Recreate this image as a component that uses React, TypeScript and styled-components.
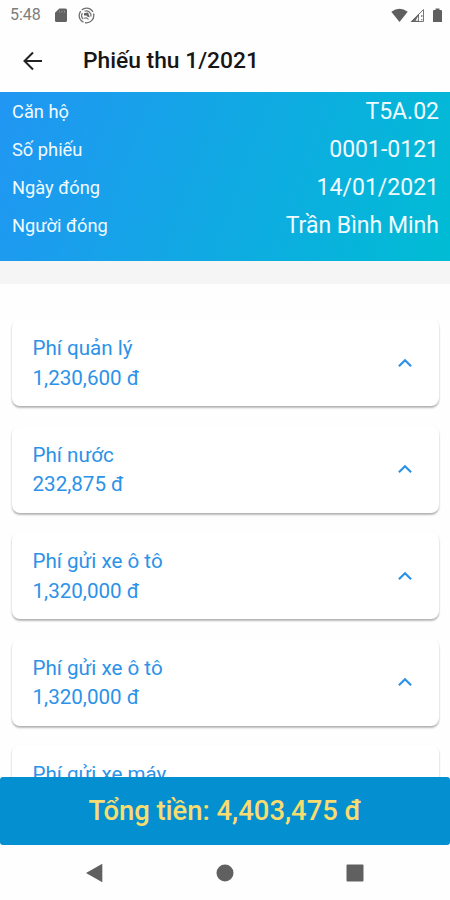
import React from 'react';
import styled, { createGlobalStyle } from 'styled-components';

const GlobalStyle = createGlobalStyle`
  * { box-sizing: border-box; }
  body { margin: 0; background: #fff; font-family: Roboto, 'Noto Sans', sans-serif; }
`;

const Screen = styled.div`
  width: 450px;
  height: 900px;
  display: flex;
  flex-direction: column;
  overflow: hidden;
  background: #fefefe;
`;

const StatusBar = styled.div`
  height: 30px;
  flex: none;
  display: flex;
  align-items: center;
  justify-content: space-between;
  padding: 0 8px 0 10px;
  color: #7c7c7c;
`;

const StatusGroup = styled.div<{ $gap: number }>`
  display: flex;
  align-items: center;
  gap: ${(p) => p.$gap}px;
`;

const Clock = styled.span`
  width: 31px;
  font-size: 16px;
  line-height: 30px;
  white-space: nowrap;
`;

const Header = styled.header`
  height: 62px;
  flex: none;
  display: flex;
  align-items: center;
  gap: 39px;
  padding: 0 0 1px 22px;
`;

const Title = styled.h1`
  margin: 0;
  font-size: 22.8px;
  line-height: 31px;
  font-weight: 500;
  color: #161616;
  white-space: nowrap;
`;

const Summary = styled.section`
  height: 169px;
  flex: none;
  padding: 1px 11px 0 12px;
  background: linear-gradient(110deg, #2196f3 0%, #00bcd4 100%);
  color: #f1fbff;
`;

const SummaryRow = styled.div`
  height: 37.8px;
  display: flex;
  align-items: center;
  justify-content: space-between;
  white-space: nowrap;
`;

const Label = styled.span`
  font-size: 18.3px;
`;

const Value = styled.span`
  font-size: 23px;
`;

const Divider = styled.div`
  height: 23px;
  flex: none;
  background: #f5f5f5;
`;

const FeeList = styled.main`
  flex: 1;
  min-height: 0;
  overflow: hidden;
  display: flex;
  flex-direction: column;
  gap: 19.6px;
  padding: 35px 11px 0 12px;
`;

const FeeCard = styled.article`
  height: 87px;
  flex: none;
  display: flex;
  align-items: flex-start;
  justify-content: space-between;
  padding: 15px 26px 0 20.5px;
  border-radius: 8px;
  background: #fff;
  box-shadow: 0 2px 2px rgba(0, 0, 0, 0.24), 0 1px 2px rgba(0, 0, 0, 0.1);
`;

const FeeText = styled.div`
  font-size: 20.6px;
  line-height: 29.5px;
  color: #2c92e8;
  white-space: nowrap;
`;

const CardIcon = styled.div`
  display: flex;
  padding-top: 23.5px;
`;

const Total = styled.footer`
  height: 68px;
  flex: none;
  display: flex;
  align-items: center;
  justify-content: center;
  border-radius: 3px;
  background: #0490d0;
  color: #f8dc70;
  font-size: 27.4px;
  font-weight: 500;
  white-space: nowrap;
`;

const NavBar = styled.nav`
  height: 55px;
  flex: none;
  display: flex;
  align-items: center;
  justify-content: space-between;
  padding: 1px 86px 0 85px;
`;

const details = [
  ['Căn hộ', 'T5A.02'],
  ['Số phiếu', '0001-0121'],
  ['Ngày đóng', '14/01/2021'],
  ['Người đóng', 'Trần Bình Minh'],
];

const fees: { name: string; amount?: string }[] = [
  { name: 'Phí quản lý', amount: '1,230,600 đ' },
  { name: 'Phí nước', amount: '232,875 đ' },
  { name: 'Phí gửi xe ô tô', amount: '1,320,000 đ' },
  { name: 'Phí gửi xe ô tô', amount: '1,320,000 đ' },
  { name: 'Phí gửi xe máy' },
];

const SdCardIcon = () => (
  <svg width="12" height="15" viewBox="0 0 12 15">
    <path d="M4.3 0.5H10.5Q12 0.5 12 2V12.5Q12 14 10.5 14H1.5Q0 14 0 12.5V4.8Z" fill="#626262" />
    <path d="M4.5 2.5V4.8M7 2.5V4.8M9.5 2.5V4.8" stroke="#8c8c8c" strokeWidth="1" />
  </svg>
);

const SyncIcon = () => (
  <svg width="17" height="17" viewBox="0 0 17 17" fill="none" stroke="#707070">
    <circle cx="8.5" cy="8.5" r="7.3" strokeWidth="1.3" strokeDasharray="13 1.5" />
    <path d="M5.2 12A4.8 4.8 0 0 1 4.4 6M6.5 4.2A4.7 4.7 0 0 1 12.9 9.5" strokeWidth="1.2" />
    <path d="M6 6.2L10 5.6L11.8 10.2L9.4 9.8L8.6 8.4L6 8.6Z" fill="#626262" stroke="none" />
    <path d="M6 11.2L8.3 10.8L10.6 12.4" strokeWidth="1.1" />
  </svg>
);

const WifiIcon = () => (
  <svg width="17" height="15" viewBox="0 0 17 15">
    <path d="M0.3 3.8Q8.5 -2.2 16.7 3.8L8.5 14Z" fill="#5e5e5e" />
  </svg>
);

const SignalIcon = () => (
  <svg width="15" height="15" viewBox="0 0 15 15">
    <path d="M1.5 13.5L13.5 1.5V13.5Z" fill="none" stroke="#777" strokeWidth="1" />
    <path d="M0.5 14L9 5.5V14Z" fill="#666" />
    <path d="M8.2 8V12.8H5.5Z" fill="#f7f7f7" />
    <path d="M11.8 7V9M11.8 11V12.2" stroke="#777" strokeWidth="1.2" />
  </svg>
);

const BatteryIcon = () => (
  <svg width="9" height="15" viewBox="0 0 9 15">
    <path d="M2.5 0.5H6.5V2H8Q9 2 9 3V14H0V3Q0 2 1 2H2.5Z" fill="#606060" />
  </svg>
);

const BackIcon = () => (
  <svg width="22" height="20" viewBox="0 0 22 20" fill="none" stroke="#222" strokeWidth="2">
    <path d="M11 1.5L2.5 10L11 18.5M2.5 10H20" />
  </svg>
);

const ChevronIcon = () => (
  <svg width="16" height="10" viewBox="0 0 16 10" fill="none" stroke="#2c92e8" strokeWidth="2.2">
    <path d="M1.9 8.2L8 2.3L14.1 8.2" />
  </svg>
);

const NavBack = () => (
  <svg width="18" height="20" viewBox="0 0 18 20"><path d="M1 10L17.3 0.8V19.2Z" fill="#606060" /></svg>
);

const NavHome = () => (
  <svg width="18" height="18" viewBox="0 0 18 18"><circle cx="9" cy="9" r="8.5" fill="#606060" /></svg>
);

const NavRecent = () => (
  <svg width="18" height="18" viewBox="0 0 18 18"><rect x="0.5" y="0.5" width="17" height="17" rx="1" fill="#606060" /></svg>
);

export default function App() {
  return (
    <>
      <GlobalStyle />
      <Screen>
        <StatusBar>
          <StatusGroup $gap={11}>
            <StatusGroup $gap={14}><Clock>5:48</Clock><SdCardIcon /></StatusGroup>
            <SyncIcon />
          </StatusGroup>
          <StatusGroup $gap={8}>
            <StatusGroup $gap={2}><WifiIcon /><SignalIcon /></StatusGroup>
            <BatteryIcon />
          </StatusGroup>
        </StatusBar>
        <Header>
          <BackIcon />
          <Title>Phiếu thu 1/2021</Title>
        </Header>
        <Summary>
          {details.map(([label, value]) => (
            <SummaryRow key={label}><Label>{label}</Label><Value>{value}</Value></SummaryRow>
          ))}
        </Summary>
        <Divider />
        <FeeList>
          {fees.map(({ name, amount }, i) => (
            <FeeCard key={i}>
              <FeeText>
                <div>{name}</div>
                {amount && <div>{amount}</div>}
              </FeeText>
              <CardIcon><ChevronIcon /></CardIcon>
            </FeeCard>
          ))}
        </FeeList>
        <Total>Tổng tiền: 4,403,475 đ</Total>
        <NavBar><NavBack /><NavHome /><NavRecent /></NavBar>
      </Screen>
    </>
  );
}
